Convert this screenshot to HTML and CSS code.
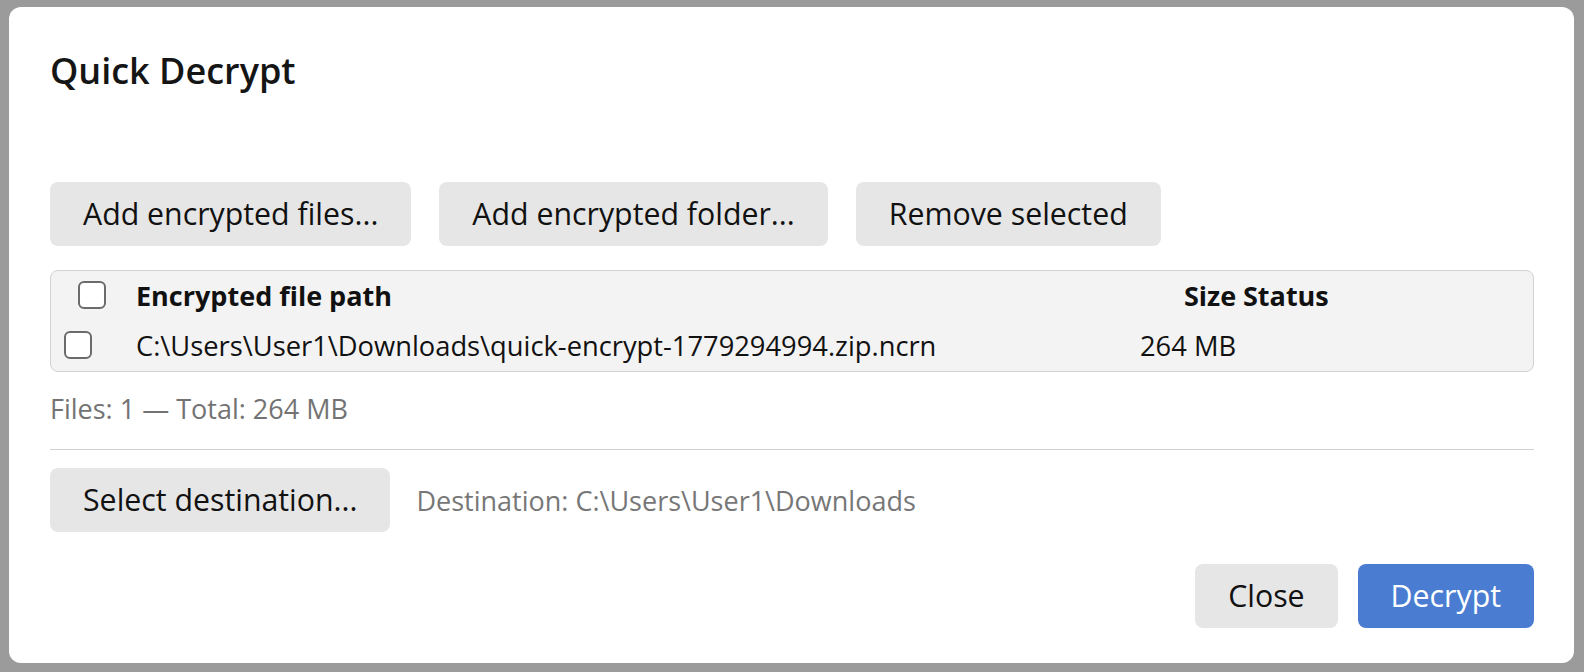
FILE: index.html
```html
<!DOCTYPE html>
<html lang="en">
<head>
<meta charset="utf-8">
<title>Quick Decrypt</title>
<link rel="stylesheet" href="styles.css">
</head>
<body>
<div class="dialog">
  <h1 class="title">Quick Decrypt</h1>
  <div class="toolbar">
    <button class="btn">Add encrypted files...</button>
    <button class="btn">Add encrypted folder...</button>
    <button class="btn">Remove selected</button>
  </div>
  <div class="table">
    <div class="row head">
      <div class="cell check"><span class="box box-head"></span></div>
      <div class="cell">Encrypted file path</div>
      <div class="cell size-head">Size</div>
      <div class="cell">Status</div>
    </div>
    <div class="row">
      <div class="cell check"><span class="box box-row"></span></div>
      <div class="cell">C:\Users\User1\Downloads\quick-encrypt-1779294994.zip.ncrn</div>
      <div class="cell">264 MB</div>
      <div class="cell"></div>
    </div>
  </div>
  <div class="summary">Files: 1 — Total: 264 MB</div>
  <div class="sep"></div>
  <div class="dest">
    <button class="btn">Select destination...</button>
    <span class="dest-text">Destination: C:\Users\User1\Downloads</span>
  </div>
  <div class="footer">
    <button class="btn">Close</button>
    <button class="btn primary">Decrypt</button>
  </div>
</div>
</body>
</html>
```
FILE: styles.css
```css
* { box-sizing: border-box; }
html, body { margin: 0; height: 100%; }
body {
  background: #9b9b9b;
  padding: 7px 10px 9px 9px;
  font-family: "Open Sans", "Noto Sans", sans-serif;
  color: #111;
}
.dialog {
  background: #fff;
  border-radius: 12px;
  height: 656px;
  padding: 44px 40px 0 41px;
  display: flex;
  flex-direction: column;
}
.title {
  margin: 0;
  font-size: 36px;
  font-weight: 600;
  line-height: 40px;
  color: #151515;
}
.toolbar {
  margin-top: 91px;
  display: flex;
  gap: 28px;
}
.btn {
  font-family: inherit;
  font-size: 30.3px;
  font-weight: 500;
  color: #111;
  background: #e6e6e6;
  border: none;
  border-radius: 8px;
  height: 64px;
  padding: 0 33px;
  line-height: 64px;
}
.table {
  margin-top: 24px;
  border: 1px solid #d2d2d2;
  border-radius: 8px;
  background: #f3f3f3;
}
.row {
  display: grid;
  grid-template-columns: 85px 1004px 103px 1fr;
  height: 50px;
  align-items: center;
  font-size: 27.3px;
  line-height: 50px;
}
.head { font-weight: 700; font-size: 27px; }
.cell { white-space: nowrap; }
.check { display: flex; align-items: center; height: 50px; }
.box {
  display: block;
  width: 28px;
  height: 28px;
  border: 2px solid #6b6b6b;
  border-radius: 6px;
  background: #fff;
}
.box-head { margin-left: 27px; margin-top: -2px; }
.box-row { margin-left: 13px; margin-top: -2px; }
.size-head { padding-left: 44px; }
.summary {
  margin-top: 19px;
  font-size: 27px;
  line-height: 36px;
  color: #737373;
}
.sep {
  margin-top: 22px;
  height: 1px;
  background: #d0d0d0;
}
.dest {
  margin-top: 18px;
  display: flex;
  align-items: center;
  gap: 26px;
}
.dest-text {
  font-size: 27px;
  color: #777;
}
.footer {
  margin-top: 32px;
  display: flex;
  justify-content: flex-end;
  gap: 20px;
}
.primary {
  background: #4a7dd2;
  color: #fff;
}
```
